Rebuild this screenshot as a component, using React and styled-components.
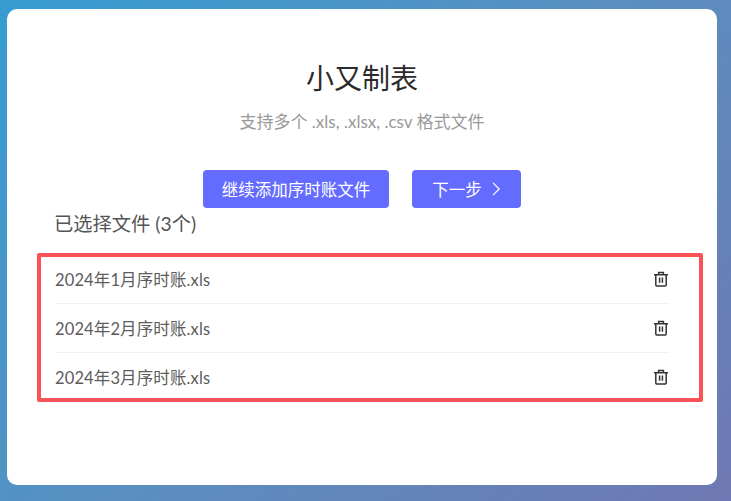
import React from "react";
import styled, { createGlobalStyle } from "styled-components";

const Global = createGlobalStyle`
  html, body { margin: 0; padding: 0; }
  body {
    width: 731px; height: 501px; overflow: hidden;
    font-family: "Lato", "Noto Sans CJK SC", sans-serif;
  }
`;
const Page = styled.div`
  width: 731px; height: 501px; box-sizing: border-box;
  padding: 9px 14px 16px 7px;
  background: linear-gradient(135deg, #359cd2 0%, #5a8fc0 50%, #6f78b2 100%);
`;
const Card = styled.main`
  height: 476px; box-sizing: border-box;
  padding: 50px 48px 0;
  background: #fff; border-radius: 10px;
`;
const Title = styled.h1`
  margin: 0; text-align: center;
  font-size: 28px; line-height: 38px; font-weight: 400; color: #2b2b2b;
`;
const Subtitle = styled.p`
  margin: 13px 0 0; text-align: center;
  font-size: 17px; line-height: 24px; color: #999;
`;
const Actions = styled.div`
  display: flex; justify-content: center; gap: 23px; margin-top: 36px;
`;
const Button = styled.button`
  height: 38px; width: ${(p) => p.$width}px; padding: 0;
  display: flex; align-items: center; justify-content: center; gap: 9px;
  border: 0; border-radius: 4px;
  background: #646cff; color: #fff;
  font-family: inherit; font-size: 16.5px;
`;
const Heading = styled.h2`
  margin: 4px 0 0 -1px; font-size: 19.3px; line-height: 24px; font-weight: 400; color: #555;
`;
const List = styled.ul`
  position: relative; list-style: none; margin: 18px 0 0; padding: 0;
`;
const Highlight = styled.div`
  position: absolute; left: -18px; right: -34px; top: -1px; bottom: -1px;
  border: 4px solid #fa5257; border-radius: 2px; pointer-events: none;
`;
const Row = styled.li`
  height: 49px; box-sizing: border-box;
  display: flex; align-items: center; justify-content: space-between;
  font-size: 16.5px; letter-spacing: 0.12px; color: #5c5c5c;
  & + & { border-top: 1px solid #f0f0f0; }
`;
const Name = styled.span`white-space: nowrap;`;
const Trash = styled.svg`
  width: 16px; height: 16px; flex: none;
  fill: none; stroke: #333; stroke-width: 1.5;
`;

const files = ["2024年1月序时账.xls", "2024年2月序时账.xls", "2024年3月序时账.xls"];

function TrashIcon() {
  return (
    <Trash viewBox="0 0 16 16">
      <path d="M1 3.8h14M5.6 3.8V1.4h4.8v2.4M2.8 3.8v10.2c0 .5.4.9.9.9h8.6c.5 0 .9-.4.9-.9V3.8M6.6 6.6v5.2M9.4 6.6v5.2" />
    </Trash>
  );
}

export default function App() {
  return (
    <>
      <Global />
      <Page>
        <Card>
          <Title>小又制表</Title>
          <Subtitle>支持多个 .xls, .xlsx, .csv 格式文件</Subtitle>
          <Actions>
            <Button $width={186}>继续添加序时账文件</Button>
            <Button $width={109}>
              下一步
              <svg width="10" height="14" viewBox="0 0 10 14" fill="none" stroke="#fff" strokeWidth="1.2">
                <path d="M2 .8l6.2 6.2L2 13.2" />
              </svg>
            </Button>
          </Actions>
          <Heading>已选择文件 (3个)</Heading>
          <List>
            <Highlight />
            {files.map((f) => (
              <Row key={f}>
                <Name>{f}</Name>
                <TrashIcon />
              </Row>
            ))}
          </List>
        </Card>
      </Page>
    </>
  );
}
